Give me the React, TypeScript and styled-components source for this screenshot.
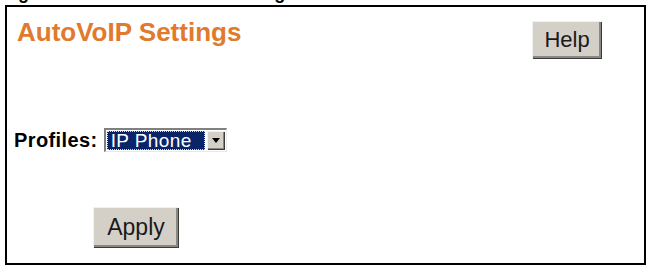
import React from "react";
import styled, { createGlobalStyle } from "styled-components";

const GlobalStyle = createGlobalStyle`
    html, body {
        margin: 0;
        padding: 0;
        background: #ffffff;
        font-family: "Liberation Sans", Arial, sans-serif;
    }
`;

const Page = styled.div`
    width: 648px;
    height: 270px;
    overflow: hidden;
    background: #ffffff;
`;

// only the descenders of the figure caption are left in the crop
const CaptionClip = styled.div`
    height: 4px;
    overflow: hidden;
`;

const Caption = styled.div`
    display: flex;
    margin-top: -17px;
    padding-left: 2px;
    font-size: 18px;
    line-height: 20px;
    font-weight: bold;
    color: #000;
    white-space: nowrap;
`;

const CaptionTitle = styled.span`
    margin-left: 58px;
`;

const Frame = styled.div`
    margin: 1px 0 0 5px;
    width: 637px;
    height: 256px;
    border: 2px solid #000;
    display: flex;
    flex-direction: column;
`;

const Header = styled.div`
    display: flex;
    justify-content: space-between;
    align-items: flex-start;
    padding: 10px 42px 0 10px;
`;

const Title = styled.h1`
    margin: 0;
    font-size: 26px;
    line-height: 31px;
    font-weight: bold;
    color: #e07a2c;
`;

const Button = styled.button<{ $w: number; $h: number; $size: number }>`
    width: ${({ $w }) => $w}px;
    height: ${({ $h }) => $h}px;
    margin-top: 4px;
    padding: 0;
    border: none;
    background: #d4d0c8;
    color: #1a1a1a;
    font-family: "Liberation Sans", Arial, sans-serif;
    font-size: ${({ $size }) => $size}px;
    box-shadow:
        inset 1px 1px #f4f2ee,
        inset -1px -1px #3a3a3a,
        inset -3px -3px #8a8780;
    cursor: pointer;
`;

const Row = styled.div`
    display: flex;
    align-items: center;
    gap: 6px;
    padding-left: 7px;
    margin-top: 69px;
`;

const Label = styled.span`
    font-size: 20px;
    font-weight: bold;
    letter-spacing: 0.4px;
    color: #000;
`;

const Select = styled.div`
    display: flex;
    width: 123px;
    height: 24px;
    box-sizing: border-box;
    background: #ffffff;
    border-top: 2px solid #808080;
    border-left: 2px solid #808080;
    border-right: 1px solid #e8e8e8;
    border-bottom: 1px solid #e8e8e8;
    padding: 1px;
`;

const Value = styled.div`
    flex: 1;
    padding-left: 4px;
    margin-right: 2px;
    background: #0a246a;
    outline: 1px dotted #e8e0a0;
    outline-offset: -1px;
    color: #ffffff;
    font-size: 19px;
    line-height: 19px;
    letter-spacing: 0.4px;
    white-space: nowrap;
`;

const Arrow = styled.div`
    width: 18px;
    display: flex;
    align-items: center;
    justify-content: center;
    background: #d4d0c8;
    box-shadow:
        inset 1px 1px #f4f2ee,
        inset -1px -1px #3a3a3a,
        inset -2px -2px #8a8780;
`;

const Footer = styled.div`
    padding-left: 86px;
    margin-top: 51px;
`;

export default function App() {
    return (
        <Page>
            <GlobalStyle />
            <CaptionClip>
                <Caption>
                    <span>Figure 99</span>
                    <CaptionTitle>AutoVoIP Settings</CaptionTitle>
                </Caption>
            </CaptionClip>
            <Frame>
                <Header>
                    <Title>AutoVoIP Settings</Title>
                    <Button $w={70} $h={38} $size={22}>Help</Button>
                </Header>
                <Row>
                    <Label>Profiles:</Label>
                    <Select>
                        <Value>IP Phone</Value>
                        <Arrow>
                            <svg width="8" height="5" viewBox="0 0 8 5">
                                <path d="M0 0h8L4 5z" fill="#000" />
                            </svg>
                        </Arrow>
                    </Select>
                </Row>
                <Footer>
                    <Button $w={86} $h={41} $size={23}>Apply</Button>
                </Footer>
            </Frame>
        </Page>
    );
}
